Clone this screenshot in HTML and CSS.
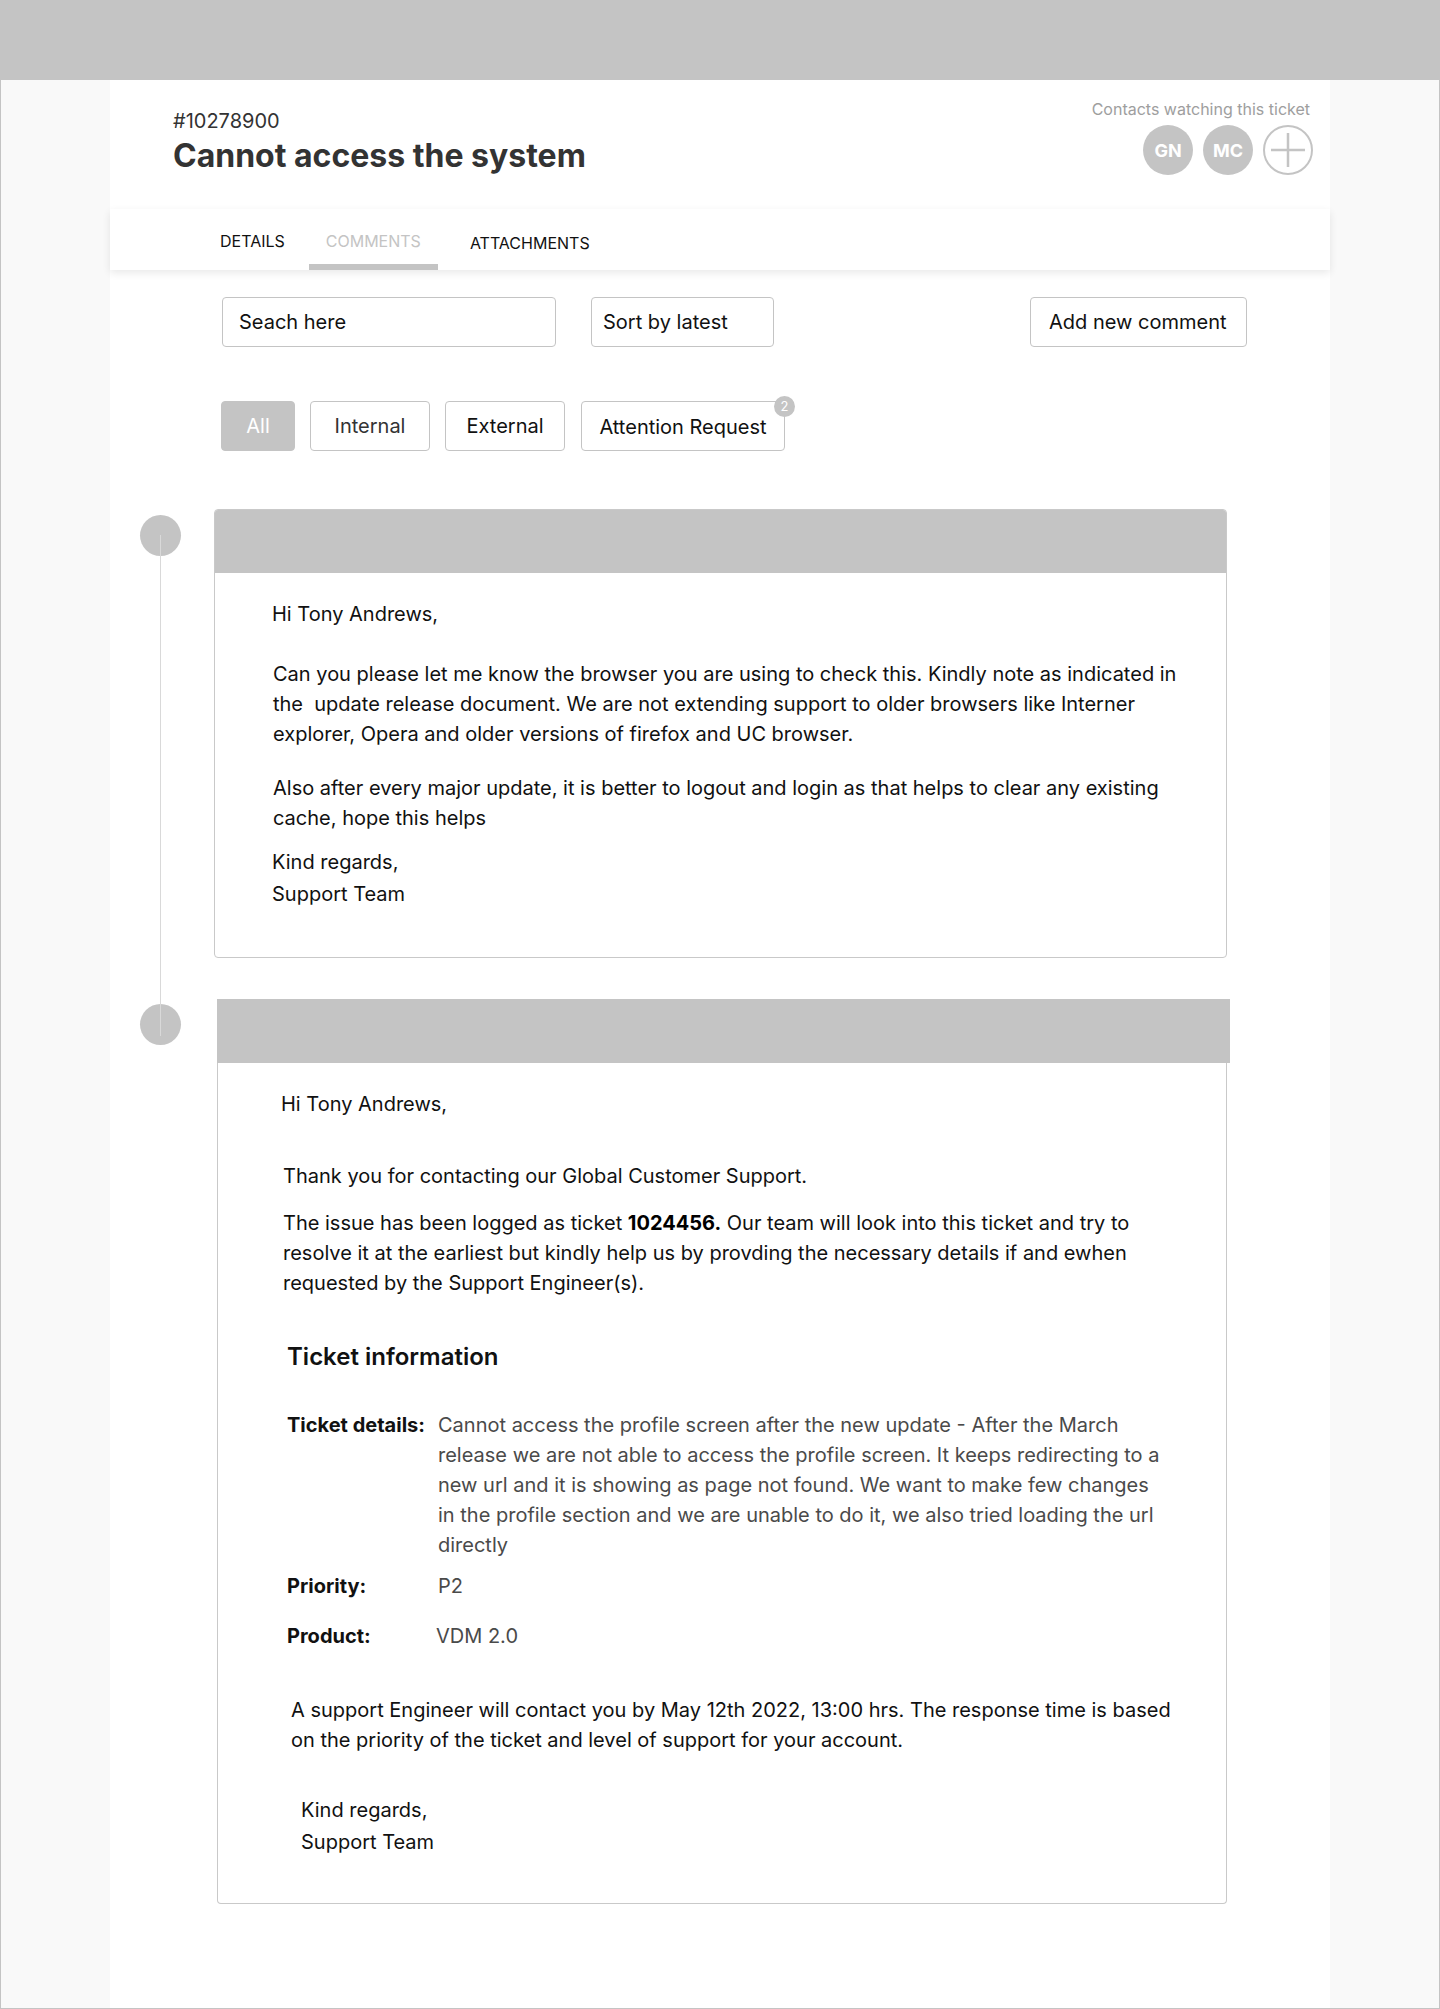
FILE: index.html
```html
<!DOCTYPE html>
<html lang="en">
<head>
<meta charset="utf-8">
<title>Cannot access the system</title>
<link rel="stylesheet" href="styles.css">
</head>
<body>
<div class="app">
  <div class="topbar"></div>
  <main class="panel">
    <header class="ticket-head">
      <div class="ticket-title">
        <div class="ticket-id">#10278900</div>
        <h1 class="ticket-name">Cannot access the system</h1>
      </div>
      <div class="watchers">
        <div class="watchers-label">Contacts watching this ticket</div>
        <div class="watchers-list">
          <span class="avatar">GN</span>
          <span class="avatar">MC</span>
          <span class="avatar avatar-add">
            <svg width="34" height="34" viewBox="0 0 34 34"><path d="M17 0v34M0 17h34" stroke="#c4c4c4" stroke-width="2.5" fill="none"/></svg>
          </span>
        </div>
      </div>
    </header>

    <nav class="tabs">
      <span class="tab">DETAILS</span>
      <span class="tab tab-active">COMMENTS</span>
      <span class="tab tab-attach">ATTACHMENTS</span>
    </nav>

    <div class="toolbar">
      <div class="field field-search">Seach here</div>
      <div class="field field-sort">Sort by latest</div>
      <div class="field field-add">Add new comment</div>
    </div>

    <div class="filters">
      <span class="chip chip-on">All</span>
      <span class="chip chip-internal">Internal</span>
      <span class="chip">External</span>
      <span class="chip chip-attn">Attention Request<span class="badge">2</span></span>
    </div>

    <section class="timeline">
      <article class="entry">
        <span class="dot"></span>
        <div class="card">
          <div class="card-head"></div>
          <div class="card-body card-body-1">
            <p class="greet">Hi Tony Andrews,</p>
            <p class="para p1">Can you please let me know the browser you are using to check this. Kindly note as indicated in<br>the&nbsp; update release document. We are not extending support to older browsers like Interner<br>explorer, Opera and older versions of firefox and UC browser.</p>
            <p class="para p2">Also after every major update, it is better to logout and login as that helps to clear any existing<br>cache, hope this helps</p>
            <p class="sign sign-1">Kind regards,<br>Support Team</p>
          </div>
        </div>
      </article>

      <article class="entry entry-2">
        <span class="dot"></span>
        <div class="card card-2">
          <div class="card-head"></div>
          <div class="card-body card-body-2">
            <p class="greet">Hi Tony Andrews,</p>
            <p class="para thanks">Thank you for contacting our Global Customer Support.</p>
            <p class="para issue">The issue has been logged as ticket <b>1024456.</b> Our team will look into this ticket and try to<br>resolve it at the earliest but kindly help us by provding the necessary details if and ewhen<br>requested by the Support Engineer(s).</p>
            <h2 class="info-title">Ticket information</h2>
            <div class="info-row info-details">
              <span class="info-label">Ticket details:</span>
              <span class="info-value">Cannot access the profile screen after the new update - After the March<br>release we are not able to access the profile screen. It keeps redirecting to a<br>new url and it is showing as page not found. We want to make few changes<br>in the profile section and we are unable to do it, we also tried loading the url<br>directly</span>
            </div>
            <div class="info-row info-priority">
              <span class="info-label">Priority:</span>
              <span class="info-value">P2</span>
            </div>
            <div class="info-row info-product">
              <span class="info-label">Product:</span>
              <span class="info-value info-value-product">VDM 2.0</span>
            </div>
            <p class="para notice">A support Engineer will contact you by May 12th 2022, 13:00 hrs. The response time is based<br>on the priority of the ticket and level of support for your account.</p>
            <p class="sign sign-2">Kind regards,<br>Support Team</p>
          </div>
        </div>
      </article>
    </section>
  </main>
</div>
</body>
</html>
```

FILE: styles.css
```css
* { box-sizing: border-box; }

html, body {
  margin: 0;
  padding: 0;
}

body {
  font-family: Inter, "Noto Sans", "Liberation Sans", sans-serif;
  color: #1a1a1a;
  background: #f9f9f9;
}

.app {
  border: 1px solid #c4c4c4;
  min-height: 2009px;
  background: #f9f9f9;
  display: flex;
  flex-direction: column;
}

.topbar {
  height: 79px;
  background: #c4c4c4;
  flex: none;
}

.panel {
  width: 1220px;
  margin: 0 auto;
  background: #ffffff;
  flex: 1;
}

/* header */
.ticket-head {
  height: 129px;
  display: flex;
  justify-content: space-between;
  padding: 29px 17px 0 63px;
}

.ticket-id {
  font-size: 20px;
  line-height: 24px;
  color: #333;
}

.ticket-name {
  margin: 3px 0 0;
  font-size: 32px;
  line-height: 40px;
  font-weight: 700;
  color: #333;
}

.watchers {
  display: flex;
  flex-direction: column;
  align-items: flex-end;
  margin-top: -10px;
}

.watchers-label {
  font-size: 16px;
  line-height: 20px;
  color: #9e9e9e;
  margin-right: 3px;
}

.watchers-list {
  display: flex;
  gap: 10px;
  margin-top: 6px;
}

.avatar {
  width: 50px;
  height: 50px;
  border-radius: 50%;
  background: #c4c4c4;
  color: #fff;
  font-weight: 700;
  font-size: 18px;
  display: flex;
  align-items: center;
  justify-content: center;
}

.avatar-add {
  background: #fff;
  border: 2.5px solid #c4c4c4;
}

/* tabs */
.tabs {
  height: 61px;
  background: #fff;
  box-shadow: 0 3px 8px rgba(0, 0, 0, 0.09);
  display: flex;
  padding-left: 93px;
  gap: 7px;
  position: relative;
}

.tab {
  height: 61px;
  padding: 22px 17px 0;
  font-size: 16px;
  line-height: 20px;
  color: #111;
}

.tab-active {
  color: #c4c4c4;
  border-bottom: 6px solid #c4c4c4;
}

.tab-attach {
  margin-left: 8px;
  padding-top: 24px;
}

/* toolbar */
.toolbar {
  display: flex;
  margin-top: 27px;
  padding: 0 83px 0 112px;
}

.field {
  height: 50px;
  border: 1px solid #c4c4c4;
  border-radius: 4px;
  font-size: 20px;
  line-height: 48px;
  color: #111;
  white-space: nowrap;
}

.field-search {
  width: 334px;
  padding-left: 16px;
}

.field-sort {
  width: 183px;
  margin-left: 35px;
  padding-left: 11px;
}

.field-add {
  width: 217px;
  margin-left: auto;
  padding-left: 18px;
}

/* filters */
.filters {
  display: flex;
  gap: 15px;
  margin-top: 54px;
  padding-left: 111px;
}

.chip {
  position: relative;
  height: 50px;
  width: 120px;
  border: 1px solid #c4c4c4;
  border-radius: 4px;
  font-size: 20px;
  line-height: 48px;
  text-align: center;
  color: #111;
}

.chip-on {
  width: 74px;
  background: #c4c4c4;
  color: #fff;
}

.chip-internal {
  color: #333;
}

.chip-attn {
  width: 204px;
  margin-left: 1px;
  line-height: 50px;
}

.badge {
  position: absolute;
  top: -6px;
  right: -11px;
  width: 21px;
  height: 21px;
  border-radius: 50%;
  background: #c4c4c4;
  color: #fff;
  font-size: 13px;
  line-height: 21px;
  text-align: center;
}

/* timeline */
.timeline {
  position: relative;
  margin-top: 58px;
}

.timeline::before {
  content: "";
  position: absolute;
  left: 50px;
  top: 26px;
  height: 501px;
  width: 1px;
  background: #d9d9d9;
  z-index: 1;
}

.entry {
  display: grid;
  grid-template-columns: 104px 1013px;
  align-items: start;
}

.entry-2 {
  margin-top: 41px;
}

.dot {
  width: 41px;
  height: 41px;
  border-radius: 50%;
  background: #c4c4c4;
  margin: 6px 0 0 30px;
}

.entry-2 .dot {
  margin-top: 5px;
}

.card {
  border: 1px solid #c9c9c9;
  border-radius: 4px;
  overflow: hidden;
  background: #fff;
}

.card-head {
  height: 63px;
  background: #c4c4c4;
}

.card-2 {
  margin-left: 3px;
  width: 1010px;
  border-top: 0;
  border-radius: 0 0 4px 4px;
  overflow: visible;
}

.card-2 .card-head {
  height: 64px;
  margin: 0 -4px 0 -1px;
}

.card-body p {
  margin: 0;
}

.card-body {
  font-size: 20px;
  line-height: 30px;
  color: #111;
}

.card-body-1 {
  padding: 26px 20px 47px 57px;
}

.card-body-1 .p1 { margin-top: 30px; padding-left: 1px; }
.card-body-1 .p2 { margin-top: 24px; padding-left: 1px; }

.card-body .sign {
  line-height: 32px;
}

.card-body .sign-1 { margin-top: 13px; }

.card-body-2 {
  padding: 26px 20px 45px 63px;
}

.card-body-2 .thanks { margin-top: 42px; padding-left: 2px; }
.card-body-2 .issue { margin-top: 17px; padding-left: 2px; }
.card-body-2 .issue b { font-weight: 700; color: #000; }

.info-title {
  margin: 44px 0 0 6px;
  font-size: 24px;
  line-height: 30px;
  font-weight: 600;
  color: #111;
}

.info-row {
  display: flex;
  margin-left: 6px;
}

.info-label {
  width: 151px;
  flex: none;
  font-weight: 700;
  color: #111;
}

.info-value {
  color: #4a4a4a;
}

.info-value-product {
  margin-left: -2px;
}

.info-details { margin-top: 38px; }
.info-priority { margin-top: 11px; }
.info-product { margin-top: 20px; }

.card-body-2 .notice { margin-top: 44px; padding-left: 10px; }
.card-body .sign-2 { margin-top: 39px; padding-left: 20px; }
```
